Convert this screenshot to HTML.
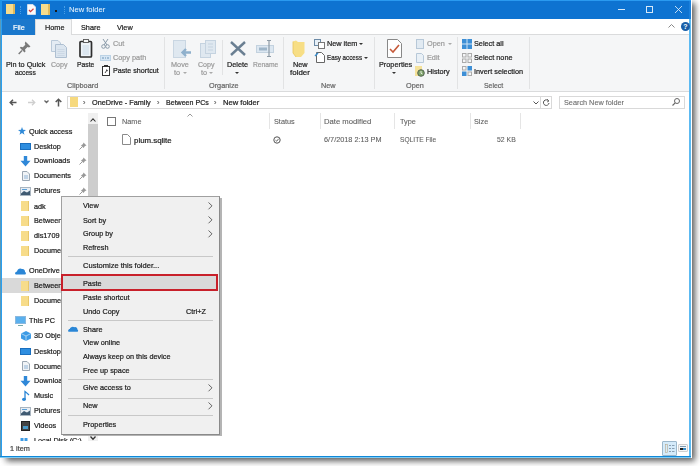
<!DOCTYPE html>
<html><head><meta charset="utf-8">
<style>
*{margin:0;padding:0;box-sizing:border-box}
html,body{width:700px;height:466px;overflow:hidden;background:#fff}
body{position:relative;font-family:"Liberation Sans",sans-serif;font-size:7.8px;color:#1c1c1c}
.a{position:absolute}
.t{position:absolute;line-height:10px;white-space:nowrap;transform:scaleX(0.935);transform-origin:0 0;-webkit-text-stroke:0.22px currentColor}
.g{color:#9a9a9a}
svg{position:absolute;overflow:visible}
</style></head><body>
<!-- window + shadow -->
<div class="a" style="left:6px;top:3px;width:689px;height:458px;background:#5a5a5a;filter:blur(3px)"></div>
<div class="a" style="left:0;top:0;width:692px;height:458px;background:#fff"></div>
<div class="a" style="left:0;top:0;width:1px;height:458px;background:#5a9ab8"></div><div class="a" style="left:1px;top:0;width:1px;height:458px;background:#2a9ff0"></div>
<div class="a" style="left:689px;top:0;width:2px;height:458px;background:#5cbaf2"></div>
<div class="a" style="left:689px;top:0;width:2px;height:19px;background:#1a80dc"></div>
<div class="a" style="left:0;top:456px;width:691px;height:1px;background:#1088d8"></div>
<div class="a" style="left:0;top:457px;width:691px;height:1px;background:#7ccbf5"></div>
<!-- title bar -->
<div class="a" style="left:1px;top:0;width:688px;height:19px;background:#0e73d1"></div>
<div class="a" style="left:0;top:0;width:691px;height:1px;background:#2a9af0"></div>
<div class="a" style="left:0;top:0;width:2px;height:19px;background:#1f95ea"></div>
<!-- tab row -->
<div class="a" style="left:2px;top:19px;width:33px;height:15.5px;background:#1b78cc"></div>
<div class="t" style="left:13px;top:22.5px;color:#fff">File</div>
<div class="a" style="left:35px;top:19px;width:37px;height:17px;background:#f5f6f7;border:1px solid #dadbdc;border-bottom:none"></div>
<div class="t" style="left:45px;top:22.5px">Home</div>
<div class="t" style="left:81px;top:22.5px">Share</div>
<div class="t" style="left:117px;top:22.5px">View</div>
<div class="a" style="left:72px;top:34px;width:617px;height:1px;background:#dadbdc"></div>
<!-- ribbon -->
<div class="a" style="left:2px;top:35px;width:687px;height:56px;background:#f5f6f7"></div>
<div class="a" style="left:2px;top:91px;width:687px;height:1px;background:#dadbdc"></div>
<!-- title bar icons -->
<div class="a" style="left:6px;top:4px;width:9px;height:10px;background:#f7dc8c;border-right:2px solid #e0b85a"></div>
<div class="a" style="left:20px;top:6px;width:1px;height:8px;border-left:1px dotted #4a9ee6"></div>
<svg style="left:27px;top:4px" width="9" height="11"><path d="M0.5 0.5 H6 L8.5 3 V10.5 H0.5 Z" fill="#fafafa" stroke="#dde6ee" stroke-width="0.8"/><path d="M2 6 L3.5 7.6 L6.5 4.8" stroke="#d23b3b" stroke-width="1.2" fill="none"/></svg>
<div class="a" style="left:41px;top:4px;width:9px;height:11px;background:#f7dc8c;border-right:2px solid #e0b85a"></div>
<div class="a" style="left:55px;top:10px;width:2px;height:2px;background:#1a1a1a"></div>
<div class="a" style="left:64px;top:6px;width:1px;height:8px;border-left:1px dotted #4a9ee6"></div>
<div class="t" style="left:69px;top:5px;color:#eaf4fd;font-size:8.1px;-webkit-text-stroke:0.05px #eaf4fd">New folder</div>
<div class="a" style="left:618px;top:9px;width:7px;height:1px;background:#d6e8f8"></div>
<div class="a" style="left:646px;top:6px;width:7px;height:7px;border:1px solid #d6e8f8"></div>
<svg style="left:675px;top:6px" width="7" height="7"><path d="M0 0 L7 7 M7 0 L0 7" stroke="#d6e8f8" stroke-width="0.9"/></svg>
<!-- ribbon min caret + help -->
<svg style="left:668px;top:24px" width="7" height="4"><path d="M0.5 3.5 L3.5 0.5 L6.5 3.5" stroke="#888" stroke-width="1" fill="none"/></svg>
<div class="a" style="left:681px;top:22px;width:9px;height:9px;border-radius:50%;background:#1a5fa8;color:#fff;font-weight:bold;font-size:7px;line-height:9px;text-align:center">?</div>
<!-- group separators -->
<div class="a" style="left:164px;top:37px;width:1px;height:52px;background:#e2e3e4"></div>
<div class="a" style="left:283px;top:37px;width:1px;height:52px;background:#e2e3e4"></div>
<div class="a" style="left:374px;top:37px;width:1px;height:52px;background:#e2e3e4"></div>
<div class="a" style="left:457px;top:37px;width:1px;height:52px;background:#e2e3e4"></div>
<div class="a" style="left:529px;top:37px;width:1px;height:52px;background:#e2e3e4"></div>
<div class="a" style="left:222px;top:40px;width:1px;height:35px;background:#e2e3e4"></div>
<!-- group labels -->
<div class="t" style="left:67px;top:81px;color:#666">Clipboard</div>
<div class="t" style="left:209px;top:81px;color:#666">Organize</div>
<div class="t" style="left:321px;top:81px;color:#666">New</div>
<div class="t" style="left:406px;top:81px;color:#666">Open</div>
<div class="t" style="left:484px;top:81px;color:#666;transform:scaleX(0.885)">Select</div>
<!-- Clipboard -->
<svg style="left:18px;top:41px" width="13" height="14"><path d="M7.5 0.5 L12.5 5.5 L11 6.5 L9.5 6 L7 8.5 L7.5 10.5 L6.5 11.5 L1.8 6.8 L2.8 5.8 L4.8 6.3 L7.3 3.8 L6.8 2.3 Z" fill="#7a7a7a"/><path d="M4 9.5 L0.7 13" stroke="#7a7a7a" stroke-width="1.4"/></svg>
<div class="t" style="left:6px;top:60px">Pin to Quick</div>
<div class="t" style="left:15px;top:68px;transform:scaleX(0.857)">access</div>
<svg style="left:51px;top:40px" width="17" height="18"><path d="M0.5 0.5 H7 L9.5 3 V11.5 H0.5 Z" fill="#e4ecf4" stroke="#b9c9d9"/><path d="M4.5 4.5 H12.5 L15.5 7.5 V17.5 H4.5 Z" fill="#dbe5ef" stroke="#aebfd1"/><path d="M6.5 9.5h7M6.5 11.5h7M6.5 13.5h7M6.5 15.5h7" stroke="#c5d3e1" stroke-width="0.7"/></svg>
<div class="t g" style="left:51px;top:60px;transform:scaleX(0.907)">Copy</div>
<svg style="left:79px;top:39px" width="14" height="19"><rect x="1" y="2.5" width="11.5" height="15.5" rx="1" fill="#eef3f8" stroke="#2f2f2f" stroke-width="1.7"/><rect x="4.5" y="0.5" width="5" height="3" fill="#f5f6f7" stroke="#555" stroke-width="0.9"/><path d="M3.5 7h6.5M3.5 9h6.5M3.5 11h6.5M3.5 13h6.5M3.5 15h6.5" stroke="#b8cde0" stroke-width="0.7"/></svg>
<div class="t" style="left:77px;top:60px;transform:scaleX(0.87)">Paste</div>
<svg style="left:101px;top:39px" width="9" height="10"><path d="M2 0 L6 6 M7 0 L3 6" stroke="#8a9aa8" stroke-width="1"/><circle cx="2.5" cy="7.5" r="1.8" stroke="#8a9aa8" fill="none"/><circle cx="6.5" cy="7.5" r="1.8" stroke="#8a9aa8" fill="none"/></svg>
<div class="t g" style="left:113px;top:39px">Cut</div>
<svg style="left:100px;top:55px" width="11" height="6"><rect x="0.5" y="0.5" width="10" height="5" fill="#d6e6f4" stroke="#bcd3e6"/><path d="M2 3h2M5 3h1M7 3h2" stroke="#6f96b8" stroke-width="1"/></svg>
<div class="t g" style="left:113px;top:53px">Copy path</div>
<svg style="left:102px;top:65px" width="8" height="11"><rect x="0.5" y="1.5" width="7" height="9" fill="#fff" stroke="#333"/><rect x="2" y="0" width="4" height="2" fill="#333"/><path d="M3 8 L5 5 M4 5h1.2v1.2" stroke="#333" stroke-width="0.9" fill="none"/></svg>
<div class="t" style="left:113px;top:66px;transform:scaleX(0.917)">Paste shortcut</div>
<!-- Organize -->
<svg style="left:173px;top:40px" width="19" height="18"><rect x="0.5" y="0.5" width="12" height="17" fill="#dfe8f0" stroke="#c9d6e2"/><path d="M18 12.5 H10 M13 9 L9.5 12.5 L13 16" stroke="#8fb0cc" stroke-width="2.4" fill="none"/></svg>
<div class="t g" style="left:171px;top:60px">Move</div>
<div class="t g" style="left:174px;top:68px">to</div><div class="a" style="left:183px;top:72px;width:0;height:0;border-left:2px solid transparent;border-right:2px solid transparent;border-top:2px solid #aaa"></div>
<svg style="left:200px;top:40px" width="16" height="18"><rect x="0.5" y="3.5" width="10" height="14" fill="#dfe8f0" stroke="#c5d3e0"/><rect x="5.5" y="0.5" width="10" height="13" fill="#dfe8f0" stroke="#c5d3e0"/><path d="M8 4h5M8 7h5M8 10h5" stroke="#c5d3e0"/></svg>
<div class="t g" style="left:198px;top:60px;transform:scaleX(0.907)">Copy</div>
<div class="t g" style="left:201px;top:68px">to</div><div class="a" style="left:209px;top:72px;width:0;height:0;border-left:2px solid transparent;border-right:2px solid transparent;border-top:2px solid #aaa"></div>
<svg style="left:230px;top:41px" width="16" height="15"><path d="M1 1 L15 14 M15 1 L1 14" stroke="#6a7f92" stroke-width="2.4"/></svg>
<div class="t" style="left:227px;top:60px">Delete</div>
<div class="a" style="left:235px;top:72px;width:0;height:0;border-left:2px solid transparent;border-right:2px solid transparent;border-top:2px solid #333"></div>
<svg style="left:256px;top:40px" width="19" height="17"><rect x="0.5" y="5.5" width="17" height="7" fill="#dce7f1" stroke="#c3d2df"/><rect x="3" y="7.5" width="8" height="3" fill="#9fb6c9"/><path d="M13 0.5 V16.5 M11 0.5h4 M11 16.5h4" stroke="#8d9aa6" stroke-width="1.2"/></svg>
<div class="t g" style="left:253px;top:60px;transform:scaleX(0.86)">Rename</div>
<!-- New -->
<svg style="left:292px;top:40px" width="14" height="18"><path d="M1 1.5 L4 0.5 L6 2 H12.5 V13 L9 17 H4 L1 13 Z" fill="#f7de85"/><path d="M1 1.5 V13 L4 17" stroke="#e8c55a" stroke-width="0.8" fill="none"/></svg>
<div class="t" style="left:293px;top:60px">New</div>
<div class="t" style="left:290px;top:68px;transform:scaleX(1.02)">folder</div>
<svg style="left:314px;top:39px" width="11" height="10"><rect x="0.5" y="0.5" width="6" height="6" fill="#e8f0f7" stroke="#6c8aa6"/><rect x="4.5" y="3.5" width="6" height="6" fill="#fff" stroke="#777"/></svg>
<div class="t" style="left:327px;top:39px">New item</div><div class="a" style="left:359px;top:43px;width:0;height:0;border-left:2px solid transparent;border-right:2px solid transparent;border-top:2px solid #333"></div>
<svg style="left:315px;top:52px" width="10" height="11"><path d="M1.5 0.5 H6.5 L9.5 3.5 V10.5 H1.5 Z" fill="#fff" stroke="#666"/><path d="M0 4 L3 1" stroke="#3a8fd0" stroke-width="1.5"/></svg>
<div class="t" style="left:327px;top:53px;transform:scaleX(0.8)">Easy access</div><div class="a" style="left:364px;top:57px;width:0;height:0;border-left:2px solid transparent;border-right:2px solid transparent;border-top:2px solid #333"></div>
<!-- Open -->
<svg style="left:387px;top:39px" width="15" height="19"><path d="M0.5 0.5 H10.5 L14.5 4.5 V18.5 H0.5 Z" fill="#fff" stroke="#888"/><path d="M3 10 L6 13 L12 6" stroke="#c65a3a" stroke-width="1.6" fill="none"/></svg>
<div class="t" style="left:379px;top:60px">Properties</div>
<div class="a" style="left:392px;top:72px;width:0;height:0;border-left:2px solid transparent;border-right:2px solid transparent;border-top:2px solid #333"></div>
<svg style="left:416px;top:39px" width="8" height="10"><rect x="0.5" y="0.5" width="7" height="9" fill="#e1eaf2" stroke="#b7c8d8"/></svg>
<div class="t g" style="left:427px;top:39px">Open</div><div class="a" style="left:448px;top:43px;width:0;height:0;border-left:2px solid transparent;border-right:2px solid transparent;border-top:2px solid #aaa"></div>
<svg style="left:416px;top:53px" width="8" height="10"><path d="M0.5 0.5 H5.5 L7.5 2.5 V9.5 H0.5 Z" fill="#e9f0f6" stroke="#b7c8d8"/></svg>
<div class="t g" style="left:427px;top:53px">Edit</div>
<div class="a" style="left:415px;top:66px;width:7px;height:10px;background:#f5e29a"></div>
<svg style="left:417px;top:69px" width="8" height="8"><circle cx="4" cy="4" r="3.3" fill="#7fa46a" stroke="#4a5a4a" stroke-width="0.9"/><path d="M4 2 V4.2 L5.5 5" stroke="#fff" stroke-width="0.8" fill="none"/></svg>
<div class="t" style="left:427px;top:67px">History</div>
<!-- Select -->
<svg style="left:462px;top:39px" width="10" height="10"><rect x="0" y="0" width="10" height="10" fill="#3d8fd6"/><path d="M5 0V10M0 5H10" stroke="#cfe3f5" stroke-width="1"/></svg>
<div class="t" style="left:474px;top:39px">Select all</div>
<svg style="left:462px;top:53px" width="10" height="10"><rect x="0.5" y="0.5" width="3.5" height="3.5" fill="none" stroke="#aaa"/><rect x="6" y="0.5" width="3.5" height="3.5" fill="none" stroke="#aaa"/><rect x="0.5" y="6" width="3.5" height="3.5" fill="none" stroke="#aaa"/><rect x="6" y="6" width="3.5" height="3.5" fill="none" stroke="#aaa"/></svg>
<div class="t" style="left:474px;top:53px">Select none</div>
<svg style="left:462px;top:66px" width="10" height="10"><rect x="0.5" y="0.5" width="3.5" height="3.5" fill="none" stroke="#aaa"/><rect x="5.5" y="0" width="4.5" height="4.5" fill="#3d8fd6"/><rect x="0" y="5.5" width="4.5" height="4.5" fill="#3d8fd6"/><rect x="6" y="6" width="3.5" height="3.5" fill="none" stroke="#aaa"/></svg>
<div class="t" style="left:474px;top:67px">Invert selection</div>
<!-- address row -->
<svg style="left:9px;top:99px" width="8" height="7"><path d="M7.5 3.5 H1.2 M4 0.7 L1.2 3.5 L4 6.3" stroke="#555" stroke-width="1.5" fill="none"/></svg>
<svg style="left:28px;top:99px" width="8" height="7"><path d="M0 3.5 H6.8 M4 0.7 L6.8 3.5 L4 6.3" stroke="#cfcfcf" stroke-width="1.3" fill="none"/></svg>
<svg style="left:44px;top:100px" width="5" height="3"><path d="M0.5 0.5 L2.5 2.5 L4.5 0.5" stroke="#666" stroke-width="1.3" fill="none"/></svg>
<svg style="left:55px;top:98px" width="7" height="9"><path d="M3.5 8.5 V1.2 M0.7 4 L3.5 1.2 L6.3 4" stroke="#555" stroke-width="1.5" fill="none"/></svg>
<div class="a" style="left:67px;top:96px;width:474px;height:13px;border:1px solid #d9d9d9;background:#fff"></div>
<div class="a" style="left:70px;top:97px;width:8px;height:10px;background:#f6d97e"></div>
<div class="t" style="left:83px;top:98px;color:#666">›</div>
<div class="t" style="left:92px;top:98px">OneDrive - Family</div>
<div class="t" style="left:157px;top:98px;color:#666">›</div>
<div class="t" style="left:166px;top:98px;transform:scaleX(0.905)">Between PCs</div>
<div class="t" style="left:214px;top:98px;color:#666">›</div>
<div class="t" style="left:223px;top:98px;transform:scaleX(0.975)">New folder</div>
<svg style="left:533px;top:101px" width="6" height="4"><path d="M0.5 0.5 L3 3 L5.5 0.5" stroke="#555" stroke-width="1" fill="none"/></svg>
<div class="a" style="left:540px;top:96px;width:12px;height:13px;border:1px solid #d9d9d9;background:#fff"></div>
<svg style="left:543px;top:99px" width="7" height="7"><path d="M5.5 2 A2.8 2.8 0 1 0 6 4" stroke="#555" stroke-width="1" fill="none"/><path d="M4 0 L6 2 L4 3" stroke="#555" fill="none" stroke-width="0.8"/></svg>
<div class="a" style="left:559px;top:96px;width:126px;height:13px;border:1px solid #d9d9d9;background:#fff"></div>
<div class="t" style="left:564px;top:98px;color:#6a6a6a;-webkit-text-stroke:0.1px #6a6a6a">Search New folder</div>
<svg style="left:672px;top:98px" width="8" height="8"><circle cx="5" cy="3" r="2.5" stroke="#666" fill="none"/><path d="M3.2 4.8 L0.5 7.5" stroke="#666" stroke-width="1.1"/></svg>
<!-- column headers -->
<svg style="left:187px;top:113px" width="6" height="4"><path d="M0.5 3.5 L3 1 L5.5 3.5" stroke="#999" stroke-width="1" fill="none"/></svg>
<div class="a" style="left:107px;top:117px;width:9px;height:9px;border:1px solid #777;background:#fff"></div>
<div class="t" style="left:122px;top:117px;color:#5f5f5f;-webkit-text-stroke:0.1px #5f5f5f">Name</div>
<div class="a" style="left:269px;top:113px;width:1px;height:16px;background:#e5e5e5"></div>
<div class="t" style="left:274px;top:117px;color:#5f5f5f;-webkit-text-stroke:0.1px #5f5f5f">Status</div>
<div class="a" style="left:320px;top:113px;width:1px;height:16px;background:#e5e5e5"></div>
<div class="t" style="left:324px;top:117px;color:#5f5f5f;-webkit-text-stroke:0.1px #5f5f5f;transform:scaleX(0.985)">Date modified</div>
<div class="a" style="left:394px;top:113px;width:1px;height:16px;background:#e5e5e5"></div>
<div class="t" style="left:400px;top:117px;color:#5f5f5f;-webkit-text-stroke:0.1px #5f5f5f">Type</div>
<div class="a" style="left:470px;top:113px;width:1px;height:16px;background:#e5e5e5"></div>
<div class="t" style="left:474px;top:117px;color:#5f5f5f;-webkit-text-stroke:0.1px #5f5f5f">Size</div>
<div class="a" style="left:520px;top:113px;width:1px;height:16px;background:#e5e5e5"></div>
<!-- file row -->
<svg style="left:122px;top:134px" width="9" height="11"><path d="M0.5 0.5 H5.5 L8.5 3.5 V10.5 H0.5 Z" fill="#fff" stroke="#8a8a8a"/></svg>
<div class="t" style="left:134px;top:135.5px;transform:scaleX(1.01)">plum.sqlite</div>
<svg style="left:273px;top:136px" width="8" height="8"><circle cx="4" cy="4" r="3.2" stroke="#555" fill="none" stroke-width="1"/><path d="M2.5 4.2 L3.7 5.2 L5.6 2.8" stroke="#555" fill="none" stroke-width="0.9"/></svg>
<div class="t" style="left:324px;top:135px;color:#5f5f5f;-webkit-text-stroke:0.1px #5f5f5f">6/7/2018 2:13 PM</div>
<div class="t" style="left:400px;top:135px;color:#5f5f5f;-webkit-text-stroke:0.1px #5f5f5f;transform:scaleX(0.853)">SQLITE File</div>
<div class="t" style="left:497px;top:135px;color:#5f5f5f;-webkit-text-stroke:0.1px #5f5f5f;transform:scaleX(0.883)">52 KB</div>
<!-- status bar -->
<div class="t" style="left:10px;top:444px;color:#444">1 item</div>
<div class="a" style="left:662px;top:441px;width:15px;height:15px;background:#d5ebfa;border:1px solid #9cb8cc;border-radius:1px"></div>
<svg style="left:665px;top:444px" width="10" height="10"><rect x="0.5" y="0.5" width="2" height="8" fill="none" stroke="#b9a98a" stroke-width="0.6"/><path d="M4 1.5h2M7 1.5h2.5M4 4.5h2M7 4.5h2.5M4 7.5h2M7 7.5h2.5" stroke="#8aa0b4" stroke-width="1"/></svg>
<div class="a" style="left:678px;top:444px;width:10px;height:8px;border:1px solid #d0d0d0;border-radius:1px;background:#f7f7f7"></div>
<div class="a" style="left:680px;top:446px;width:6px;height:1px;background:#7a9ab4"></div>
<div class="a" style="left:680px;top:448px;width:6px;height:2px;background:linear-gradient(90deg,#222 50%,#3a8fc8 50%)"></div>
<div class="a" style="left:2px;top:113px;width:96px;height:328px;overflow:hidden">
<div class="a" style="left:0;top:165px;width:86px;height:15px;background:#d9d9d9"></div>
<svg style="left:16px;top:14px" width="8" height="8"><path d="M4 0 L5 2.8 L8 2.9 L5.6 4.8 L6.5 7.7 L4 6 L1.5 7.7 L2.4 4.8 L0 2.9 L3 2.8 Z" fill="#2f8ad8"/></svg>
<div class="t" style="left:27px;top:13.7px">Quick access</div>
<div class="a" style="left:18px;top:30px;width:11px;height:7px;background:#2e8ee0;border:1px solid #1a6fbf"></div>
<div class="t" style="left:32px;top:28.6px">Desktop</div>
<svg style="left:77px;top:29px" width="8" height="8"><path d="M4.5 0.5 L7.5 3.5 L6 4 L4.5 6 L2 3.5 L4 2 Z" fill="#999"/><path d="M3 5 L0.5 7.5" stroke="#999"/></svg>
<svg style="left:18px;top:43px" width="11" height="11"><path d="M3.8 0 H7.2 V4.8 H10.5 L5.5 10.5 L0.5 4.8 H3.8 Z" fill="#2f88d8"/></svg>
<div class="t" style="left:32px;top:43.4px">Downloads</div>
<svg style="left:77px;top:44px" width="8" height="8"><path d="M4.5 0.5 L7.5 3.5 L6 4 L4.5 6 L2 3.5 L4 2 Z" fill="#999"/><path d="M3 5 L0.5 7.5" stroke="#999"/></svg>
<svg style="left:20px;top:58px" width="8" height="10"><path d="M0.5 0.5 H5 L7.5 3 V9.5 H0.5 Z" fill="#f0f3f6" stroke="#9aa6b2"/><path d="M2 5h4M2 7h4" stroke="#8fb3d6"/></svg>
<div class="t" style="left:32px;top:58.3px">Documents</div>
<svg style="left:77px;top:59px" width="8" height="8"><path d="M4.5 0.5 L7.5 3.5 L6 4 L4.5 6 L2 3.5 L4 2 Z" fill="#999"/><path d="M3 5 L0.5 7.5" stroke="#999"/></svg>
<svg style="left:18px;top:74px" width="11" height="9"><rect x="0.5" y="0.5" width="10" height="8" fill="#e8eef4" stroke="#a9b5c0"/><path d="M1 6.5 L4 4 L7 5.5 L10 3.5 V8 H1 Z" fill="#3f5a72"/><rect x="2" y="2" width="5" height="1" fill="#5a9fd8"/></svg>
<div class="t" style="left:32px;top:73.3px">Pictures</div>
<svg style="left:77px;top:74px" width="8" height="8"><path d="M4.5 0.5 L7.5 3.5 L6 4 L4.5 6 L2 3.5 L4 2 Z" fill="#999"/><path d="M3 5 L0.5 7.5" stroke="#999"/></svg>
<div class="a" style="left:19px;top:88px;width:8px;height:10px;background:#f7dc8a;border-right:1px solid #e8c76a"></div>
<div class="t" style="left:32px;top:88.7px">adk</div>
<div class="a" style="left:19px;top:103px;width:8px;height:10px;background:#f7dc8a;border-right:1px solid #e8c76a"></div>
<div class="t" style="left:32px;top:103.3px">Between PCs</div>
<div class="a" style="left:19px;top:118px;width:8px;height:10px;background:#f7dc8a;border-right:1px solid #e8c76a"></div>
<div class="t" style="left:32px;top:118.4px">dis1709</div>
<div class="a" style="left:19px;top:133px;width:8px;height:10px;background:#f7dc8a;border-right:1px solid #e8c76a"></div>
<div class="t" style="left:32px;top:133.3px">Documents</div>
<svg style="left:13px;top:154px" width="11" height="8"><path d="M1 7.5 C-0.5 7.5 0 4.5 2 4.5 C2.5 2 5 0.5 7 2 C8.5 1.5 10.5 3 10 5 C11.5 5.5 11 7.5 10 7.5 Z" fill="#2a86d6"/></svg>
<div class="t" style="left:27px;top:153.1px">OneDrive</div>
<div class="a" style="left:19px;top:168px;width:8px;height:10px;background:#f7dc8a;border-right:1px solid #e8c76a"></div>
<div class="t" style="left:32px;top:168.3px">Between PCs</div>
<div class="a" style="left:19px;top:183px;width:8px;height:10px;background:#f7dc8a;border-right:1px solid #e8c76a"></div>
<div class="t" style="left:32px;top:183.4px">Documents</div>
<svg style="left:13px;top:203px" width="11" height="10"><rect x="0.5" y="0.5" width="10" height="7" fill="#5ab0ee" stroke="#8ab8de"/><path d="M3 9.5h5" stroke="#7aa"/></svg>
<div class="t" style="left:27px;top:203.2px">This PC</div>
<svg style="left:19px;top:218px" width="10" height="10"><path d="M5 0 L10 2.5 V7.5 L5 10 L0 7.5 V2.5 Z" fill="#3d9be5"/><path d="M0 2.5 L5 5 L10 2.5 M5 5 V10" stroke="#bfe0f8" stroke-width="0.8" fill="none"/></svg>
<div class="t" style="left:32px;top:218.1px">3D Objects</div>
<div class="a" style="left:18px;top:235px;width:11px;height:7px;background:#2e8ee0;border:1px solid #1a6fbf"></div>
<div class="t" style="left:32px;top:233.7px">Desktop</div>
<svg style="left:20px;top:248px" width="8" height="10"><path d="M0.5 0.5 H5 L7.5 3 V9.5 H0.5 Z" fill="#f0f3f6" stroke="#9aa6b2"/><path d="M2 5h4M2 7h4" stroke="#8fb3d6"/></svg>
<div class="t" style="left:32px;top:248.6px">Documents</div>
<svg style="left:18px;top:263px" width="11" height="11"><path d="M3.8 0 H7.2 V4.8 H10.5 L5.5 10.5 L0.5 4.8 H3.8 Z" fill="#2f88d8"/></svg>
<div class="t" style="left:32px;top:263.4px">Downloads</div>
<svg style="left:20px;top:278px" width="8" height="10"><path d="M3 8 V0.5 Q5 2 7 4" stroke="#2a86d6" stroke-width="1.3" fill="none"/><ellipse cx="2" cy="8.3" rx="2" ry="1.6" fill="#2a86d6"/></svg>
<div class="t" style="left:32px;top:278.3px">Music</div>
<svg style="left:18px;top:294px" width="11" height="9"><rect x="0.5" y="0.5" width="10" height="8" fill="#e8eef4" stroke="#a9b5c0"/><path d="M1 6.5 L4 4 L7 5.5 L10 3.5 V8 H1 Z" fill="#3f5a72"/><rect x="2" y="2" width="5" height="1" fill="#5a9fd8"/></svg>
<div class="t" style="left:32px;top:293.3px">Pictures</div>
<div class="a" style="left:19px;top:308px;width:9px;height:10px;background:#444;border:1px solid #222"></div><div class="a" style="left:21px;top:313px;width:5px;height:3px;background:#4a9ac8"></div>
<div class="t" style="left:32px;top:308.2px">Videos</div>
<svg style="left:18px;top:324px" width="11" height="9"><path d="M0.5 1h3v3h-3zM4.5 1h3v3h-3zM0.5 5h3v3h-3zM4.5 5h3v3h-3z" fill="#3d9be5"/></svg>
<div class="t" style="left:32px;top:323.2px">Local Disk (C:)</div>
<div class="a" style="left:86px;top:0;width:10px;height:328px;background:#f0f0f0"></div>
<svg style="left:88px;top:4.5px" width="6" height="4"><path d="M0.5 3.5 L3 0.8 L5.5 3.5" stroke="#333" stroke-width="1.1" fill="none"/></svg>
<div class="a" style="left:86px;top:11px;width:10px;height:200px;background:#cdcdcd"></div>
<svg style="left:88px;top:323px" width="6" height="4"><path d="M0.5 0.5 L3 3.2 L5.5 0.5" stroke="#333" stroke-width="1.3" fill="none"/></svg>
</div><div class="a" style="left:63px;top:198px;width:159px;height:238px;background:#b4b4b4"></div>
<div class="a" style="left:61px;top:196px;width:159px;height:239px;background:#f0f0f0;border:1px solid #a0a0a0;border-right-color:#8a8a8a;border-bottom-color:#8a8a8a"></div>
<div class="t" style="left:83px;top:201.4px">View</div>
<svg style="left:208px;top:202px" width="5" height="8"><path d="M0.5 0.5 L4 3.8 L0.5 7.3" stroke="#666" stroke-width="1" fill="none"/></svg>
<div class="t" style="left:83px;top:215.6px">Sort by</div>
<svg style="left:208px;top:216px" width="5" height="8"><path d="M0.5 0.5 L4 3.8 L0.5 7.3" stroke="#666" stroke-width="1" fill="none"/></svg>
<div class="t" style="left:83px;top:229.1px">Group by</div>
<svg style="left:208px;top:230px" width="5" height="8"><path d="M0.5 0.5 L4 3.8 L0.5 7.3" stroke="#666" stroke-width="1" fill="none"/></svg>
<div class="t" style="left:83px;top:242.6px">Refresh</div>
<div class="a" style="left:68px;top:256px;width:145px;height:1px;background:#c8c8c8"></div>
<div class="t" style="left:83px;top:260.6px;transform:scaleX(0.967)">Customize this folder...</div>
<div class="a" style="left:61px;top:274px;width:157px;height:17px;background:#d9d9d9;border:2px solid #c8202a"></div>
<div class="t" style="left:83px;top:278.8px">Paste</div>
<div class="t" style="left:83px;top:292.6px">Paste shortcut</div>
<div class="t" style="left:83px;top:306.5px">Undo Copy</div>
<div class="t" style="left:186px;top:306.5px">Ctrl+Z</div>
<div class="a" style="left:68px;top:320px;width:145px;height:1px;background:#c8c8c8"></div>
<div class="t" style="left:83px;top:324.9px">Share</div>
<svg style="left:68px;top:326px" width="10" height="6"><path d="M1 5.8 C-0.5 5.8 0 3 1.8 3 C2.3 1 4.6 0 6.5 1.2 C8 0.8 9.6 2 9.4 3.6 C10.5 4 10.3 5.8 9.4 5.8 Z" fill="#2a86d6"/></svg>
<div class="t" style="left:83px;top:338.4px">View online</div>
<div class="t" style="left:83px;top:351.9px">Always keep on this device</div>
<div class="t" style="left:83px;top:365.9px">Free up space</div>
<div class="a" style="left:68px;top:379px;width:145px;height:1px;background:#c8c8c8"></div>
<div class="t" style="left:83px;top:383.1px">Give access to</div>
<svg style="left:208px;top:384px" width="5" height="8"><path d="M0.5 0.5 L4 3.8 L0.5 7.3" stroke="#666" stroke-width="1" fill="none"/></svg>
<div class="a" style="left:68px;top:398px;width:145px;height:1px;background:#c8c8c8"></div>
<div class="t" style="left:83px;top:401.1px">New</div>
<svg style="left:208px;top:402px" width="5" height="8"><path d="M0.5 0.5 L4 3.8 L0.5 7.3" stroke="#666" stroke-width="1" fill="none"/></svg>
<div class="a" style="left:68px;top:415px;width:145px;height:1px;background:#c8c8c8"></div>
<div class="t" style="left:83px;top:419.8px">Properties</div></body></html>
